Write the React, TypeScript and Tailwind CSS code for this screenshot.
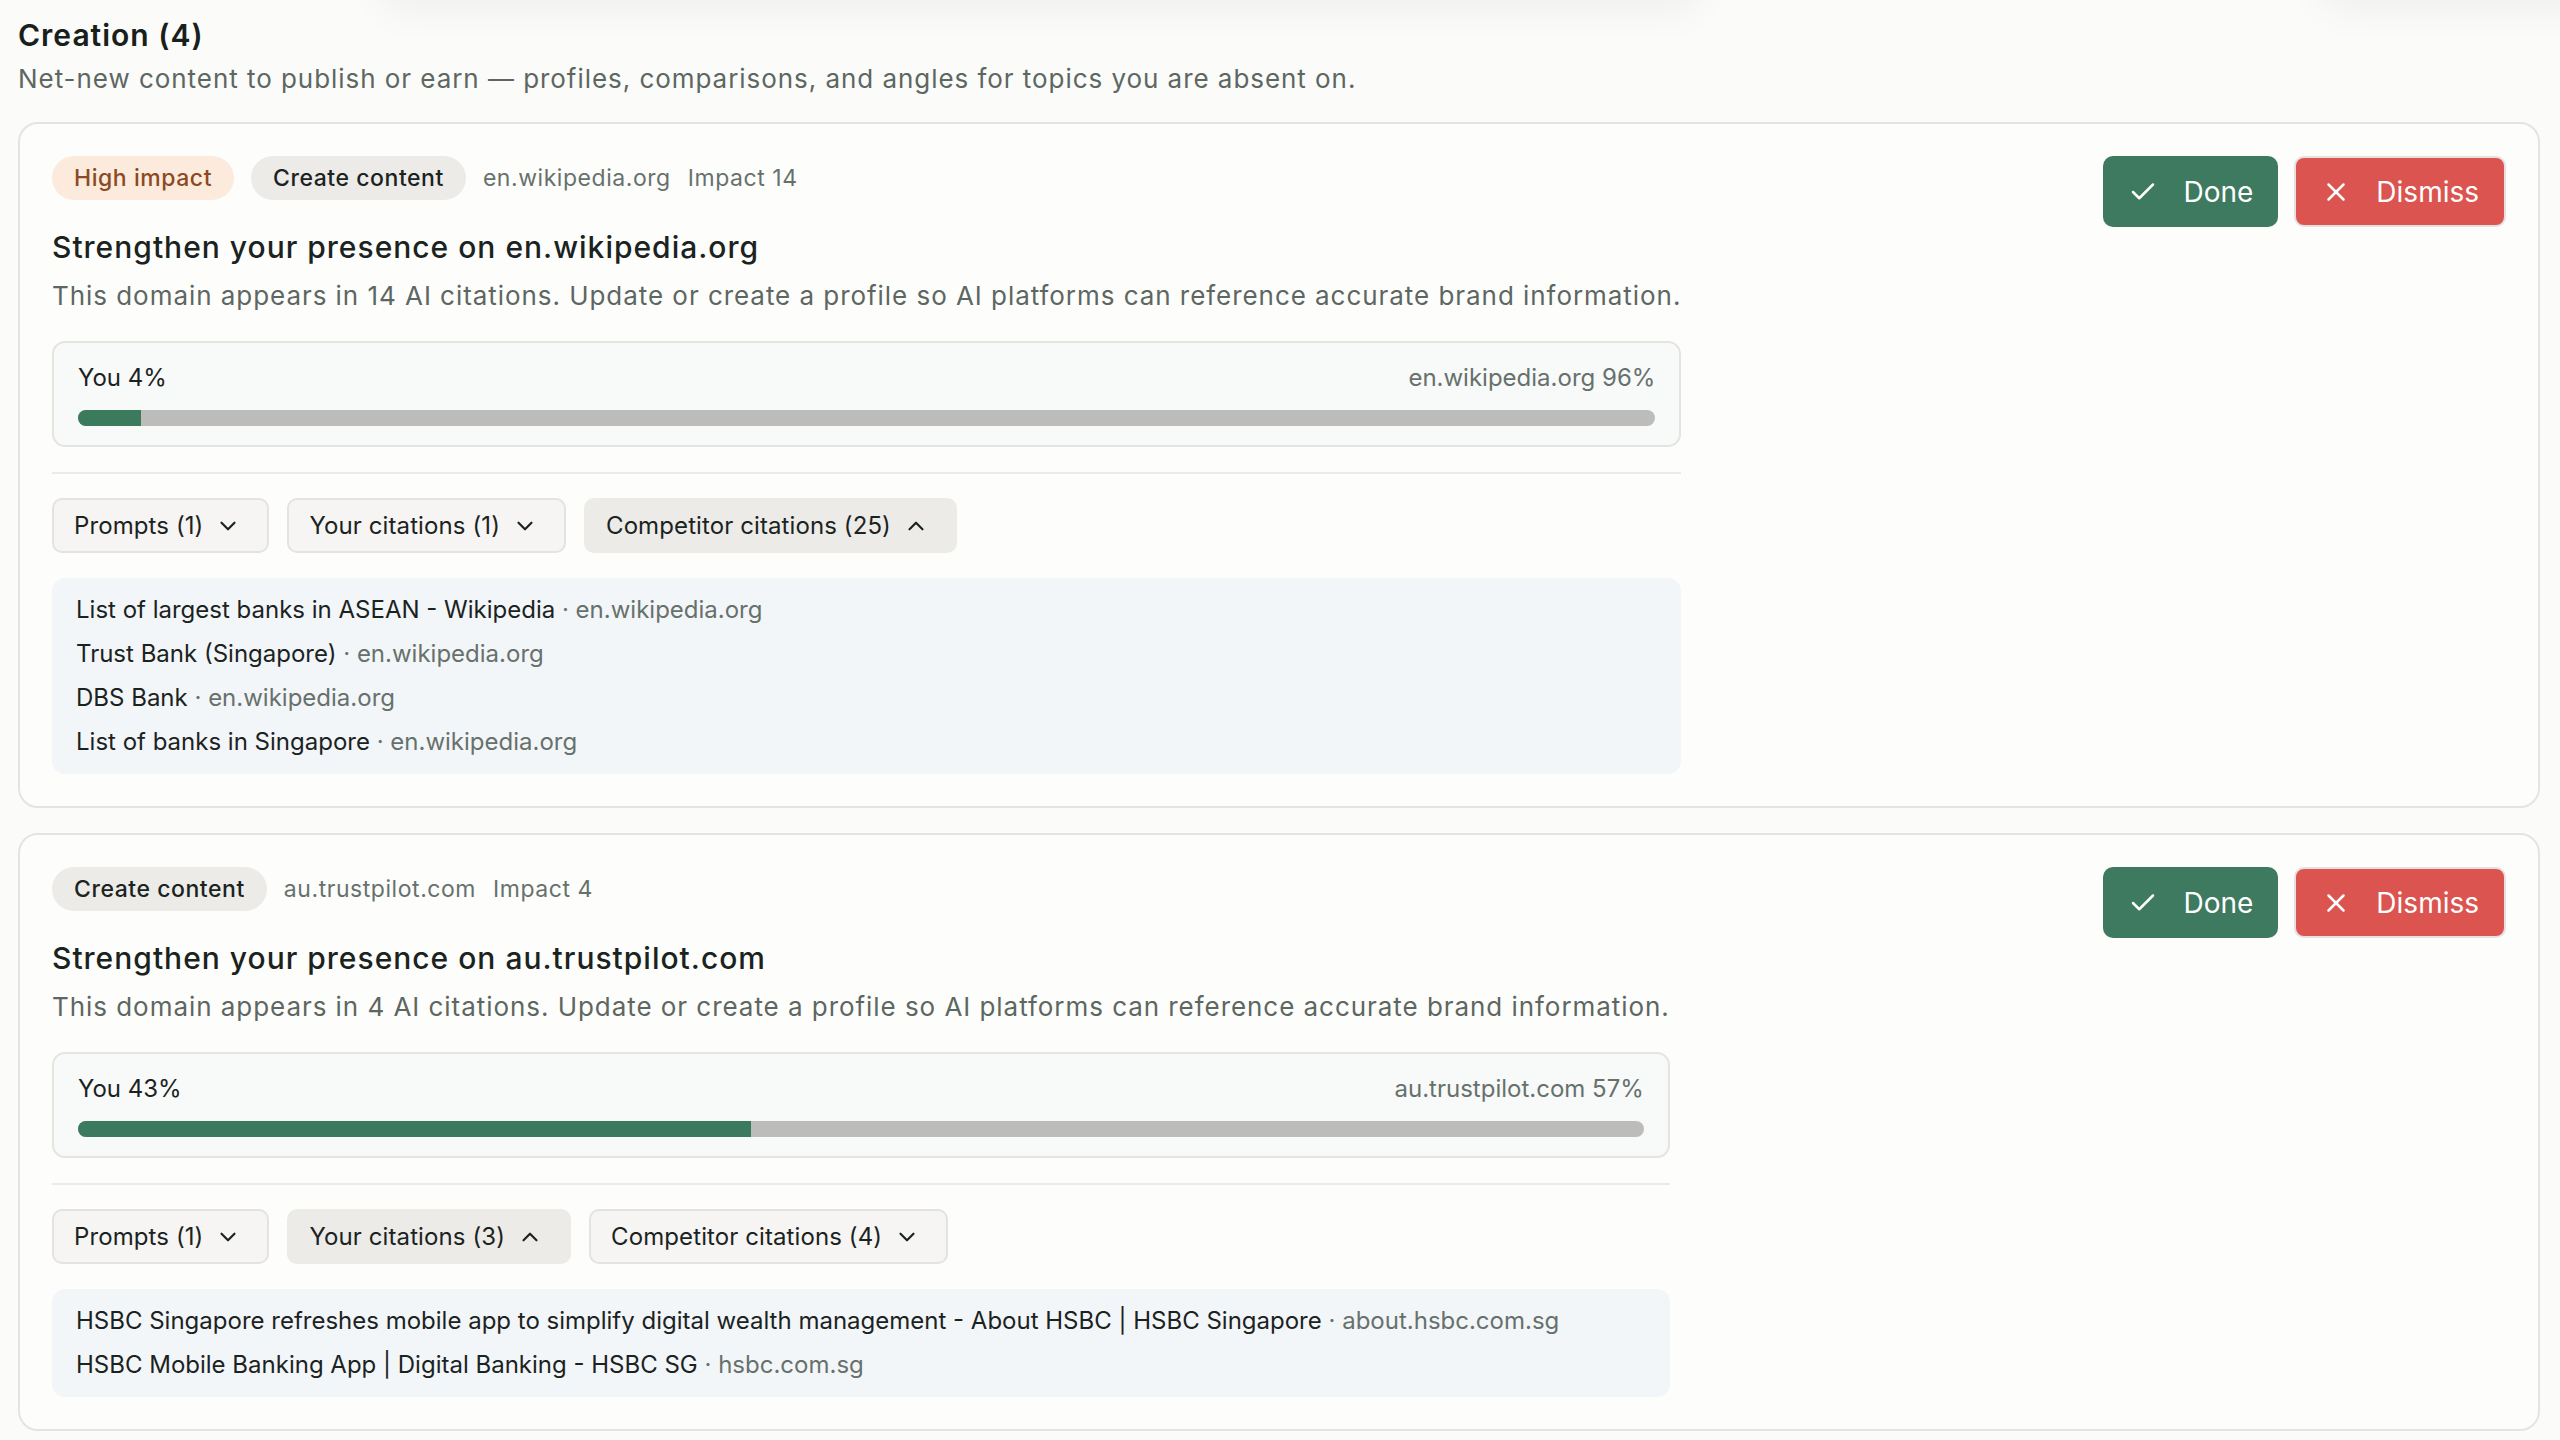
import React from "react"
import { Check, X, ChevronDown, ChevronUp } from "lucide-react"

interface Citation {
    title: string
    domain: string
}

interface Rec {
    highImpact: boolean
    domain: string
    impact: number
    mentions: number
    you: number
    prompts: number
    yours: number
    competitors: number
    open: "yours" | "competitors"
    citations: Array<Citation>
}

const RECS: Array<Rec> = [
    {
        highImpact: true,
        domain: "en.wikipedia.org",
        impact: 14,
        mentions: 14,
        you: 4,
        prompts: 1,
        yours: 1,
        competitors: 25,
        open: "competitors",
        citations: [
            { title: "List of largest banks in ASEAN - Wikipedia", domain: "en.wikipedia.org" },
            { title: "Trust Bank (Singapore)", domain: "en.wikipedia.org" },
            { title: "DBS Bank", domain: "en.wikipedia.org" },
            { title: "List of banks in Singapore", domain: "en.wikipedia.org" },
        ],
    },
    {
        highImpact: false,
        domain: "au.trustpilot.com",
        impact: 4,
        mentions: 4,
        you: 43,
        prompts: 1,
        yours: 3,
        competitors: 4,
        open: "yours",
        citations: [
            {
                title: "HSBC Singapore refreshes mobile app to simplify digital wealth management - About HSBC | HSBC Singapore",
                domain: "about.hsbc.com.sg",
            },
            { title: "HSBC Mobile Banking App | Digital Banking - HSBC SG", domain: "hsbc.com.sg" },
        ],
    },
]

function Toggle({ label, open }: { label: string; open: boolean }) {
    return (
        <button
            className={`flex h-[55px] items-center gap-[12px] rounded-[10px] border-2 pl-[20px] pr-[26px] text-[24px] tracking-[0.1px] text-[#1b231f] ${
                open ? "border-[#ecebe8] bg-[#ecebe8]" : "border-[#e4e3e0] bg-[#f6f5f3]"
            }`}
        >
            {label}
            {open ? <ChevronUp size={26} strokeWidth={2} /> : <ChevronDown size={26} strokeWidth={2} />}
        </button>
    )
}

function Card({ rec }: { rec: Rec }) {
    return (
        <div className="flex items-start justify-between rounded-[20px] border-2 border-[#e4e4e1] bg-[#fdfdfc] p-[32px]">
            <div className="flex flex-col">
                <div className="flex items-center gap-[17px] text-[23px] tracking-[0.55px]">
                    {rec.highImpact && (
                        <span className="flex h-[44px] items-center rounded-full bg-[#fcebdc] px-[22px] font-medium text-[#8b4a24]">
                            High impact
                        </span>
                    )}
                    <span className="flex h-[44px] items-center rounded-full bg-[#ecebe8] px-[22px] font-medium text-[#1b231f]">
                        Create content
                    </span>
                    <span className="text-[#67716c]">{rec.domain}</span>
                    <span className="text-[#67716c]">Impact {rec.impact}</span>
                </div>

                <h3 className="mt-[27px] text-[30px] leading-[40px] font-medium tracking-[1px] text-[#1b231f]">
                    Strengthen your presence on {rec.domain}
                </h3>
                <p className="mt-[11px] text-[26px] leading-[36px] tracking-[0.95px] whitespace-nowrap text-[#5d6762]">
                    This domain appears in {rec.mentions} AI citations. Update or create a profile so AI platforms can reference accurate brand information.
                </p>

                <div className="mt-[27px] rounded-[13px] border-2 border-[#e4e4e1] bg-[#f8f9f9] px-[24px] pt-[19px] pb-[19px]">
                    <div className="flex items-center justify-between text-[24px] leading-[32px]">
                        <span className="text-[#1b231f]">You {rec.you}%</span>
                        <span className="text-[#67716c]">
                            {rec.domain} {100 - rec.you}%
                        </span>
                    </div>
                    <div className="mt-[16px] h-[16px] overflow-hidden rounded-full bg-[#bcbdba]">
                        <div className="h-full bg-[#3c7a5e]" style={{ width: `${rec.you}%` }} />
                    </div>
                </div>

                <div className="mt-[25px] h-[2px] bg-[#ebebe9]" />

                <div className="mt-[24px] flex gap-[18px]">
                    <Toggle label={`Prompts (${rec.prompts})`} open={false} />
                    <Toggle label={`Your citations (${rec.yours})`} open={rec.open === "yours"} />
                    <Toggle label={`Competitor citations (${rec.competitors})`} open={rec.open === "competitors"} />
                </div>

                <div className="mt-[25px] rounded-[13px] bg-[#f3f6f9] px-[24px] py-[10px]">
                    {rec.citations.map((c, idx) => (
                        <div key={idx} className="text-[24px] leading-[44px] text-[#1b231f]">
                            {c.title}
                            <span className="text-[#67716c]"> · {c.domain}</span>
                        </div>
                    ))}
                </div>
            </div>

            <div className="flex shrink-0 items-center gap-[16px]">
                <button className="flex h-[71px] items-center gap-[25px] rounded-[10px] bg-[#3d7a5f] px-[25px] text-[28px] text-white">
                    <Check size={30} strokeWidth={2} />
                    Done
                </button>
                <button className="flex h-[71px] items-center gap-[25px] rounded-[10px] border-2 border-[#e6e1e0] bg-[#dc5450] px-[25px] text-[28px] text-white">
                    <X size={30} strokeWidth={2} />
                    Dismiss
                </button>
            </div>
        </div>
    )
}

export default function App() {
    return (
        <div className="relative min-h-screen overflow-hidden bg-[#fbfbfa] font-['Inter',sans-serif]">
            {/* shadows of the cards scrolled above */}
            <div className="absolute -top-[60px] left-[380px] h-[60px] w-[1320px] rounded-[20px] shadow-[0_10px_40px_rgba(0,0,0,0.05)]" />
            <div className="absolute -top-[60px] left-[2320px] h-[60px] w-[300px] rounded-[20px] shadow-[0_10px_40px_rgba(0,0,0,0.05)]" />

            <div className="relative pt-[17px] pr-[20px] pl-[18px]">
                <h2 className="text-[30px] leading-[36px] font-semibold tracking-[1px] text-[#17201b]">Creation (4)</h2>
                <p className="mt-[9px] text-[26px] leading-[34px] tracking-[0.95px] text-[#5d6762]">
                    Net-new content to publish or earn — profiles, comparisons, and angles for topics you are absent on.
                </p>

                <div className="mt-[26px] flex flex-col gap-[25px] pb-[20px]">
                    {RECS.map((rec, idx) => (
                        <Card key={idx} rec={rec} />
                    ))}
                </div>
            </div>
        </div>
    )
}
